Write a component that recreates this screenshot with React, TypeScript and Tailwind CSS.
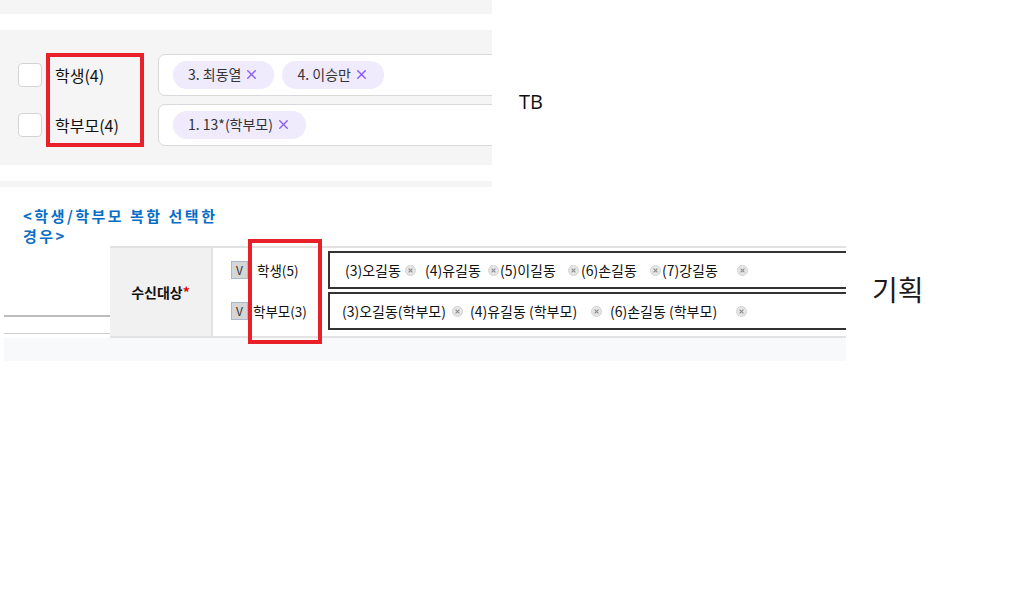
import { X } from "lucide-react";

const kr = { fontFamily: '"Noto Sans CJK KR", "Noto Sans", sans-serif' };

const Chip = ({ label }: { label: string }) => (
  <span className="inline-flex h-[28px] shrink-0 items-center gap-[3px] rounded-full bg-[#efeafc] px-[15px] text-[14px] text-[#333]">
    {label}
    <X className="h-[15px] w-[15px] text-[#8b5cf6]" strokeWidth={2.2} />
  </span>
);

const CircleX = () => (
  <svg width="11" height="11" viewBox="0 0 11 11" className="shrink-0">
    <circle cx="5.5" cy="5.5" r="5" fill="#e6e6e6" stroke="#d2d2d2" />
    <path d="M3.6 3.6 L7.4 7.4 M7.4 3.6 L3.6 7.4" stroke="#8a8a8a" strokeWidth="1.1" />
  </svg>
);

const Tag = ({ text, w, mr }: { text: string; w: number; mr: number }) => (
  <span className="inline-flex shrink-0 items-center" style={{ marginRight: mr }}>
    <span className="whitespace-nowrap" style={{ width: w }}>
      {text}
    </span>
    <CircleX />
  </span>
);

const VBox = () => (
  <span className="inline-flex h-[18px] w-[17px] shrink-0 items-center justify-center border border-[#a9b8cc] bg-[#d6d6d6] text-[12px] text-[#333]">
    V
  </span>
);

export default function App() {
  return (
    <div className="relative h-[603px] w-[1027px] overflow-hidden bg-white text-[#111]" style={kr}>
      {/* TB */}
      <div className="flex">
        <div className="w-[492px] shrink-0 overflow-hidden">
          <div className="h-[14px] bg-[#f5f5f5]" />
          <div className="h-[16px] bg-white" />
          <div className="flex flex-col gap-[9px] bg-[#f5f5f5] pb-[20px] pt-[24px]">
            {[
              { label: "학생(4)", chips: ["3. 최동열", "4. 이승만"] },
              { label: "학부모(4)", chips: ["1. 13*(학부모)"] },
            ].map((r) => (
              <div key={r.label} className="flex h-[41px] items-center">
                <span className="ml-[18px] h-[24px] w-[24px] shrink-0 rounded-[4px] border border-[#d4d4d4] bg-white" />
                <span className="ml-[13px] w-[103px] shrink-0 whitespace-nowrap text-[16px] text-[#111]">{r.label}</span>
                <div className="flex h-[42px] w-[400px] shrink-0 items-center gap-[8px] rounded-[7px] border border-[#d9d9d9] bg-white pl-[14px]">
                  {r.chips.map((c) => (
                    <Chip key={c} label={c} />
                  ))}
                </div>
              </div>
            ))}
          </div>
          <div className="h-[16px] bg-white" />
          <div className="h-[6px] bg-[#f5f5f5]" />
        </div>
        <div className="ml-[27px] mt-[88px] text-[20px] leading-[28px] text-[#111]" style={{ fontFamily: '"Open Sans", sans-serif' }}>
          TB
        </div>
      </div>

      {/* 기획 */}
      <div className="mt-[19px] pl-[23px] text-[15px] font-bold leading-[20px] tracking-[2.5px] text-[#0a6ec4]">
        &lt;학생/학부모 복합 선택한
        <br />
        경우&gt;
      </div>

      <div className="flex">
        <div className="ml-[4px] w-[842px] shrink-0">
          <div className="flex">
            <div className="w-[106px] shrink-0">
              <div className="mt-[69px] h-[2px] bg-[#bdbdbd]" />
              <div className="mt-[16px] h-px bg-[#cfcfcf]" />
            </div>
            <div className="flex w-[736px] shrink-0 overflow-hidden border-y-2 border-[#e2e2e2]">
              <div className="flex w-[103px] shrink-0 items-center justify-center border-r-2 border-[#e2e2e2] bg-[#f1f1f1] text-[14px] font-bold">
                수신대상<span className="text-[#e00]">*</span>
              </div>
              <div className="flex flex-col gap-[3px] pb-[6px] pt-[3px]">
                {[
                  {
                    label: "학생(5)",
                    lp: "ml-[9px] w-[71px]",
                    pl: "pl-[15px]",
                    tags: [
                      { text: "(3)오길동", w: 60, mr: 9 },
                      { text: "(4)유길동", w: 63, mr: 1 },
                      { text: "(5)이길동", w: 68, mr: 2 },
                      { text: "(6)손길동", w: 69, mr: 1 },
                      { text: "(7)강길동", w: 75, mr: 0 },
                    ],
                  },
                  {
                    label: "학부모(3)",
                    lp: "ml-[5px] w-[75px]",
                    pl: "pl-[12px]",
                    tags: [
                      { text: "(3)오길동(학부모)", w: 110, mr: 7 },
                      { text: "(4)유길동 (학부모)", w: 121, mr: 8 },
                      { text: "(6)손길동 (학부모)", w: 126, mr: 0 },
                    ],
                  },
                ].map((r) => (
                  <div key={r.label} className="flex h-[38px] items-center">
                    <span className="ml-[18px] flex shrink-0">
                      <VBox />
                    </span>
                    <span className={`${r.lp} shrink-0 whitespace-nowrap text-[13.5px]`}>{r.label}</span>
                    <div className={`flex h-[38px] w-[540px] shrink-0 items-center border-2 border-[#333] text-[14px] ${r.pl}`}>
                      {r.tags.map((t) => (
                        <Tag key={t.text} {...t} />
                      ))}
                    </div>
                  </div>
                ))}
              </div>
            </div>
          </div>
          <div className="h-[23px] bg-[#f8f9fb]" />
        </div>
        <div className="ml-[26px] mt-[22px] text-[28px] text-[#1a1a1a]">기획</div>
      </div>

      {/* annotation boxes */}
      <div className="absolute left-[46px] top-[53px] h-[94px] w-[98px] border-4 border-[#e8202a]" />
      <div className="absolute left-[248px] top-[239px] h-[105px] w-[74px] border-4 border-[#e8202a]" />
    </div>
  );
}
